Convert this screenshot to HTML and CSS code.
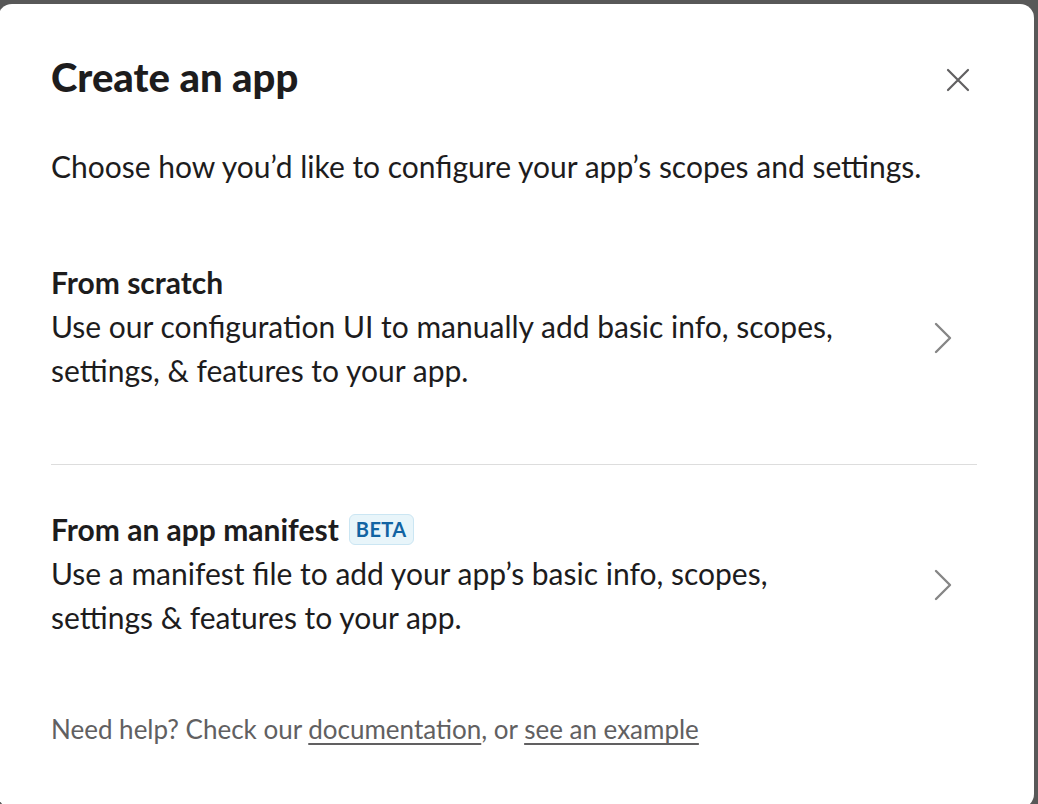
FILE: index.html
```html
<!DOCTYPE html>
<html>
<head>
<meta charset="utf-8">
<link rel="stylesheet" href="styles.css">
</head>
<body>
<div class="modal">
  <div class="header">
    <h1 class="title">Create an app</h1>
    <button class="close" aria-label="Close">
      <svg width="24" height="24" viewBox="0 0 24 24"><path d="M2 2 L22 22 M22 2 L2 22" stroke="#616061" stroke-width="2.2" fill="none" stroke-linecap="round"/></svg>
    </button>
  </div>
  <p class="subtitle">Choose how you’d like to configure your app’s scopes and settings.</p>
  <div class="option option-first">
    <div class="option-text">
      <div class="option-title">From scratch</div>
      <div class="option-desc">Use our configuration UI to manually add basic info, scopes,<br>settings, &amp; features to your app.</div>
    </div>
    <svg class="chevron" width="20" height="32" viewBox="0 0 20 32"><path d="M3 2 L17 16 L3 30" stroke="#868686" stroke-width="2.4" fill="none" stroke-linecap="round" stroke-linejoin="round"/></svg>
  </div>
  <div class="divider"></div>
  <div class="option option-second">
    <div class="option-text">
      <div class="option-title">From an app manifest <span class="badge">BETA</span></div>
      <div class="option-desc">Use a manifest file to add your app’s basic info, scopes,<br>settings &amp; features to your app.</div>
    </div>
    <svg class="chevron" width="20" height="32" viewBox="0 0 20 32"><path d="M3 2 L17 16 L3 30" stroke="#868686" stroke-width="2.4" fill="none" stroke-linecap="round" stroke-linejoin="round"/></svg>
  </div>
  <p class="footer">Need help? Check our <a href="#">documentation</a>, or <a href="#">see an example</a></p>
</div>
</body>
</html>
```
FILE: styles.css
```css
html, body {
  margin: 0;
  padding: 0;
  height: 100%;
  overflow: hidden;
}
body {
  background: #585858;
  font-family: Lato, "Open Sans", sans-serif;
  color: #1d1c1d;
}
.modal {
  box-sizing: border-box;
  width: 1036px;
  height: 804px;
  margin: 4px 0 0 -2px;
  background: #fff;
  border-radius: 14px;
  padding: 0 57px 0 53px;
  display: flex;
  flex-direction: column;
}
.header {
  display: flex;
  align-items: center;
  justify-content: space-between;
  padding-top: 51px;
}
.title {
  margin: 0;
  font-size: 40px;
  line-height: 44px;
  font-weight: 900;
  letter-spacing: 0;
}
.close {
  border: 0;
  background: none;
  padding: 0;
  margin-right: 7px;
  margin-top: 6px;
  width: 24px;
  height: 24px;
  display: flex;
}
.subtitle {
  margin: 45px 0 0;
  font-size: 30px;
  line-height: 44px;
}
.option {
  display: flex;
  align-items: center;
  justify-content: space-between;
}
.option-first {
  margin-top: 72px;
}
.option-second {
  margin-top: 42px;
}
.option-title {
  font-size: 30px;
  line-height: 44px;
  font-weight: 700;
  display: flex;
  align-items: center;
}
.option-desc {
  font-size: 30px;
  line-height: 44px;
}
.chevron {
  margin-right: 24px;
  margin-top: 24px;
}
.divider {
  height: 1px;
  background: #dddddd;
  margin-top: 72px;
}
.badge {
  display: inline-block;
  margin-left: 10px;
  padding: 0 6px;
  height: 29px;
  line-height: 29px;
  font-size: 20px;
  font-weight: 700;
  color: #1264a3;
  background: #e8f5fa;
  border: 1px solid #cbe6f3;
  border-radius: 6px;
  letter-spacing: 0.4px;
}
.footer {
  margin: 73px 0 0;
  font-size: 26px;
  line-height: 34px;
  color: #616061;
}
.footer a {
  color: #616061;
  text-decoration: underline;
  text-underline-offset: 4px;
}
```
